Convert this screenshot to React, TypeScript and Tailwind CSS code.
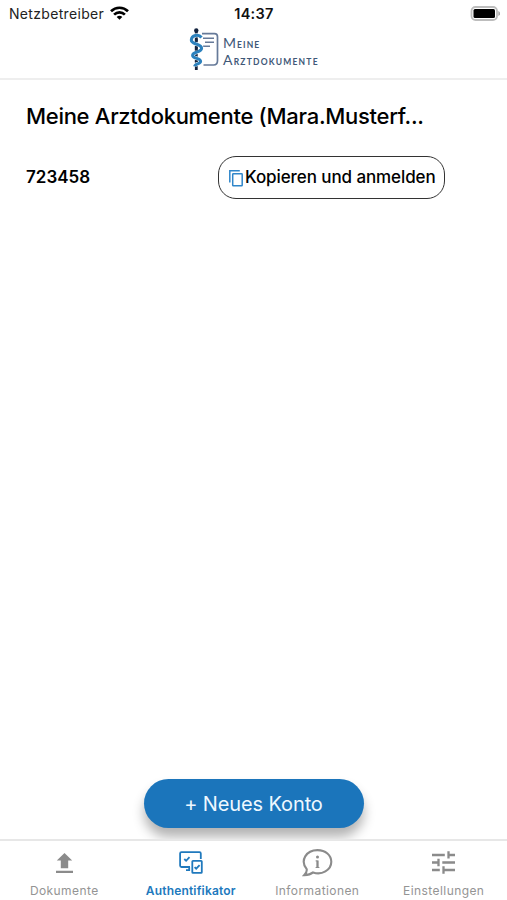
import React from "react";

function WifiIcon() {
  return (
    <svg width="19" height="14" viewBox="0 0 19 14" fill="none" stroke="#000" strokeWidth="2.7">
      <path d="M1 5.2C5.8.6 13.2.6 18 5.2" />
      <path d="M4.1 8.6c3.1-3 7.7-3 10.8 0" />
      <path d="M6.7 10.9c1.6-1.5 4-1.5 5.6 0L9.5 13.8z" fill="#000" stroke="none" />
    </svg>
  );
}

function BatteryIcon() {
  return (
    <svg width="30" height="15" viewBox="0 0 30 15">
      <rect x="1.500" y="1" width="25.500" height="13" rx="4" fill="#fff" stroke="#bdbdbd" strokeWidth="1.800" />
      <rect x="3.500" y="3" width="21.500" height="9" rx="1.500" fill="#000" />
      <path d="M28.300 5c2.400.8 2.400 4.200 0 5z" fill="#aaa" />
    </svg>
  );
}

function StaffIcon() {
  return (
    <svg width="32" height="45" viewBox="0 0 32 45" fill="none">
      <path d="M13 5.700h12.500q3 0 3 3v24q0 4.300-4 4.300H14.500" stroke="#667a99" strokeWidth="1.700" />
      <path d="M14 10.300h11M16 14.300h9M14 18.300h7" stroke="#667a99" strokeWidth="1.600" />
      <path d="M7.300 2v40" stroke="#14243f" strokeWidth="2.800" />
      <circle cx="7.300" cy="2.500" r="2.200" fill="#14243f" />
      <path d="M12.500 9.500C9.500 5.700 2.600 7.300 2.300 12c-.2 4.600 10.200 3.400 10.300 8.300.1 4.200-8.900 3.200-9 6.900-.1 3.600 7.900 2.700 8 6 .1 3-5.800 2.500-5.900 5.200" stroke="#fff" strokeWidth="4" />
      <path d="M12.500 9.500C9.500 5.700 2.600 7.300 2.300 12c-.2 4.600 10.200 3.400 10.300 8.300.1 4.200-8.900 3.200-9 6.900-.1 3.600 7.900 2.700 8 6 .1 3-5.800 2.500-5.900 5.200" stroke="#2c81bd" strokeWidth="3" />
      <path d="M7.300 10.500v3M7.300 18.500v4M7.300 32.500v1.500" stroke="#14243f" strokeWidth="2.800" />
    </svg>
  );
}

function CopyIcon() {
  return (
    <svg width="15" height="17" viewBox="0 0 15 17" fill="none" stroke="#2f86ca" strokeWidth="1.500">
      <path d="M.8 12.500V.8h10" />
      <rect x="3.700" y="3.800" width="9.500" height="12" rx="0.600" />
    </svg>
  );
}

function UploadIcon() {
  return (
    <svg width="17" height="20" viewBox="0 0 17 20" fill="#8b8b8b">
      <path d="M8.500 0 16.200 7.600h-4v7.600H4.800V7.600h-4zM0 17.800h17V20H0z" />
    </svg>
  );
}

function DevicesIcon() {
  return (
    <svg width="24" height="24" viewBox="0 0 24 24" fill="none" stroke="#2079bd" strokeWidth="1.800">
      <path d="M11 16H2.500q-1.400 0-1.400-1.400V2.500q0-1.400 1.400-1.400h18q1.300 0 1.300 1.400V8M7 19.200h4M10.200 16v4" />
      <rect x="13.300" y="9.900" width="9.500" height="12" rx="0.700" />
      <path d="m5.300 8 1.800 1.800 3.400-3.700M15.600 16.100l1.600 1.600 3.400-3.600" />
    </svg>
  );
}

function InfoIcon() {
  return (
    <svg width="31" height="28" viewBox="0 0 31 28" fill="none" stroke="#8b8b8b" strokeWidth="2.100">
      <path d="M4.700 20.200C-2.300 11.400 4.200 1.100 15.500 1.100c8 0 13.800 5 13.800 11.700 0 8.300-9.700 13.800-18.200 10.600-2 1.700-5.100 2.700-8.800 2.700 1.900-1.900 2.800-3.600 2.400-5.900z" />
      <path d="M15.500 11.500V19" strokeWidth="2.300" />
      <path d="M13.600 11.900h2M13.600 18.500h3.800" strokeWidth="1" />
      <circle cx="15.500" cy="8" r="1.500" fill="#8b8b8b" stroke="none" />
    </svg>
  );
}

function TuneIcon() {
  return (
    <svg width="23" height="23" viewBox="0 0 23 23" fill="none" stroke="#8b8b8b" strokeWidth="2.300">
      <path d="M0 4h12.800M16.500 4H23M16.500.2v7.400M0 11.500h6.500M10.300 11.500H23M6.500 7.800v7.400M0 19h7.800M11.500 19H23M11.500 15.300v7.400" />
    </svg>
  );
}

const tabs = [
  { label: "Dokumente", icon: <UploadIcon />, style: "text-[#949494] tracking-[0.42px]" },
  { label: "Authentifikator", icon: <DevicesIcon />, style: "text-[#2079bd] font-semibold tracking-[0.180px]" },
  { label: "Informationen", icon: <InfoIcon />, style: "text-[#949494] tracking-[0.42px]" },
  { label: "Einstellungen", icon: <TuneIcon />, style: "text-[#949494] tracking-[0.42px]" },
];

export default function App() {
  return (
    <div className="flex h-[900px] w-[507px] flex-col overflow-hidden bg-white font-['Inter',sans-serif] text-black">
      <header className="flex h-[80px] shrink-0 flex-col border-b-2 border-[#eeeeee]">
        <div className="grid h-[28px] grid-cols-3 items-center pr-[7px] pl-[9px]">
          <div className="flex items-center gap-[6px] pb-[2px] text-[14px] text-[#222]">
            <span className="tracking-[0.320px]">Netzbetreiber</span>
            <WifiIcon />
          </div>
          <span className="pr-px text-center text-[14.500px] font-semibold tracking-[0.300px] text-[#111]">14:37</span>
          <div className="flex justify-end pb-px">
            <BatteryIcon />
          </div>
        </div>
        <div className="flex h-[46px] pl-[189px]">
          <StaffIcon />
          <div className="flex flex-col pt-[6px] pl-[2px] font-['Lato',sans-serif] text-[8.500px] font-bold text-[#405878]">
            <span className="h-[17px] leading-[17px] tracking-[1.100px]">
              <span className="text-[14px] font-normal">M</span>EINE
            </span>
            <span className="h-[17px] leading-[17px] tracking-[1.200px] whitespace-nowrap">
              <span className="text-[14px] font-normal">A</span>RZTDOKUMENTE
            </span>
          </div>
        </div>
      </header>

      <main className="flex flex-1 flex-col">
        <h1 className="mt-[20px] pl-[26px] text-[22px] leading-[32px] font-medium tracking-[-0.290px] whitespace-nowrap">
          Meine Arztdokumente (Mara.Musterf...
        </h1>
        <div className="mt-[24px] flex items-center justify-between pr-[62px] pl-[26px]">
          <span className="pt-px text-[17px] font-semibold">723458</span>
          <button className="flex h-[43px] w-[227px] items-center rounded-[18px] border-[1.500px] border-[#333] pt-px pl-[10px] text-[17px] font-medium whitespace-nowrap">
            <CopyIcon />
            <span className="pl-px tracking-[-0.090px]">Kopieren und anmelden</span>
          </button>
        </div>
        <button className="mt-auto mb-[11px] ml-[144px] h-[49px] w-[220px] rounded-full bg-[#1b75bb] pt-px pr-px text-[20px] tracking-[-0.120px] text-[#eef8ff] shadow-[0_9px_12px_rgba(0,0,0,0.3)]">
          + Neues Konto
        </button>
      </main>

      <nav className="relative grid h-[61px] shrink-0 grid-cols-4 border-t-2 border-[#e7e7e7] bg-white pl-px">
        {tabs.map((tab) => (
          <div key={tab.label} className="flex flex-col items-center">
            <div className="flex h-[43px] items-center justify-center">{tab.icon}</div>
            <span className={"text-[12px] leading-[14px] whitespace-nowrap " + tab.style}>{tab.label}</span>
          </div>
        ))}
      </nav>
    </div>
  );
}
